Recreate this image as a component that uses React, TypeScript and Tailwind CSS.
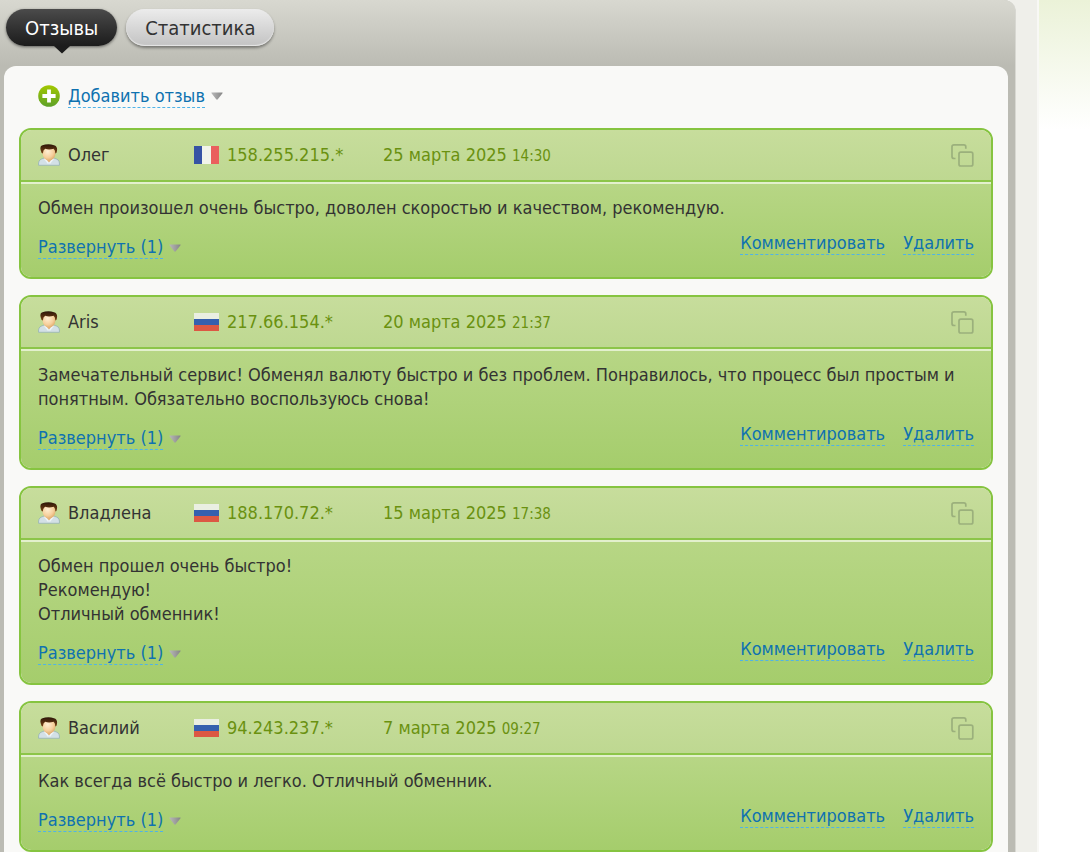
import { useState } from "react";

type Country = "fr" | "ru";

interface Review {
  id: number;
  name: string;
  country: Country;
  ip: string;
  date: string;
  time: string;
  lines: string[];
  replies: number;
}

const reviews: Review[] = [
  {
    id: 1,
    name: "Олег",
    country: "fr",
    ip: "158.255.215.*",
    date: "25 марта 2025",
    time: "14:30",
    lines: ["Обмен произошел очень быстро, доволен скоростью и качеством, рекомендую."],
    replies: 1,
  },
  {
    id: 2,
    name: "Aris",
    country: "ru",
    ip: "217.66.154.*",
    date: "20 марта 2025",
    time: "21:37",
    lines: [
      "Замечательный сервис! Обменял валюту быстро и без проблем. Понравилось, что процесс был простым и понятным. Обязательно воспользуюсь снова!",
    ],
    replies: 1,
  },
  {
    id: 3,
    name: "Владлена",
    country: "ru",
    ip: "188.170.72.*",
    date: "15 марта 2025",
    time: "17:38",
    lines: ["Обмен прошел очень быстро!", "Рекомендую!", "Отличный обменник!"],
    replies: 1,
  },
  {
    id: 4,
    name: "Василий",
    country: "ru",
    ip: "94.243.237.*",
    date: "7 марта 2025",
    time: "09:27",
    lines: ["Как всегда всё быстро и легко. Отличный обменник."],
    replies: 1,
  },
];

const linkClass =
  "border-b border-dashed border-[#4fb3e8] text-[#0f72b0] leading-[22px] hover:text-[#d04a1c] cursor-pointer";

function PlusIcon() {
  return (
    <svg className="h-[22px] w-[22px]" viewBox="0 0 22 22" aria-hidden="true">
      <defs>
        <linearGradient id="plus-fill" x1="0" y1="0" x2="0" y2="1">
          <stop offset="0" stopColor="#a3c800" />
          <stop offset="1" stopColor="#5da129" />
        </linearGradient>
      </defs>
      <circle cx="11" cy="11" r="10.8" fill="url(#plus-fill)" />
      <path d="M11 4.4v13.200M4.400 11h13.200" stroke="#fff" strokeWidth="3.8" />
    </svg>
  );
}

function ArrowDown() {
  return (
    <svg className="h-2 w-3" viewBox="0 0 12 8" aria-hidden="true">
      <defs>
        <linearGradient id="arrow-fill" x1="0" y1="0" x2="1" y2="0">
          <stop offset="0" stopColor="#b9b9b9" />
          <stop offset="1" stopColor="#858585" />
        </linearGradient>
      </defs>
      <path d="M0.800 0.500h10.400q0.800 0 0.300 0.800L6.800 7.300q-0.800 0.800-1.600 0L0.500 1.300q-0.500-0.800 0.300-0.800z" fill="url(#arrow-fill)" />
    </svg>
  );
}

function UserIcon() {
  return (
    <svg className="h-[22px] w-[22px]" viewBox="0 0 22 22" aria-hidden="true">
      <defs>
        <radialGradient id="user-face" cx="0.4" cy="0.35" r="0.75">
          <stop offset="0" stopColor="#fff0d4" />
          <stop offset="0.6" stopColor="#f6cf9c" />
          <stop offset="1" stopColor="#d9a05f" />
        </radialGradient>
        <linearGradient id="user-hair" x1="0" y1="0" x2="0" y2="1">
          <stop offset="0" stopColor="#2b1508" />
          <stop offset="1" stopColor="#7a4416" />
        </linearGradient>
      </defs>
      <path d="M0.600 21.300q-0.600-5 2.900-6.300l4-1.500h7l4 1.500q3.500 1.300 2.900 6.300z" fill="#d3e0e6" stroke="#9cb8b4" strokeWidth="0.900" />
      <path d="M7 14L11 18.500l4-4.500z" fill="#e9b578" />
      <path d="M6.600 14.500l3.900 5M15.400 14.500l-3.900 5" stroke="#eef4f7" strokeWidth="1.300" />
      <ellipse cx="11" cy="9.500" rx="6.400" ry="7" fill="url(#user-face)" />
      <path d="M3.600 9Q1 2.800 3.800 1.600Q10-1 16 1.200Q20.600 2.600 18.400 9L17.300 9.500Q17.300 5.800 15.600 4.800Q10.500 6 7.200 4.700Q5 6 4.900 9.500z" fill="url(#user-hair)" />
    </svg>
  );
}

function Flag({ country }: { country: Country }) {
  if (country === "fr") {
    return (
      <svg className="h-[18px] w-[25px]" viewBox="0 0 25 18" role="img" aria-label="FR">
        <path d="M0 0h8v18H0z" fill="#3653a4" />
        <path d="M8 0h9v18H8z" fill="#f1f4ea" />
        <path d="M17 0h8v18h-8z" fill="#ea5f5d" />
      </svg>
    );
  }
  return (
    <svg className="h-[18px] w-[25px]" viewBox="0 0 25 18" role="img" aria-label="RU">
      <path d="M0 0h25v6H0z" fill="#eaefe2" />
      <path d="M0 6h25v6H0z" fill="#3560ae" />
      <path d="M0 12h25v6H0z" fill="#dc5843" />
    </svg>
  );
}

function CopyIcon() {
  return (
    <svg className="h-6 w-6" viewBox="0 0 24 24" fill="none" stroke="#9bb07c" strokeWidth="1.700" aria-hidden="true">
      <rect x="9" y="9.200" width="13.800" height="13.800" rx="1.800" />
      <path d="M5.500 15.500H4q-2 0-2-2V3.800q0-2 2-2h9.800q2 0 2 2v2" />
    </svg>
  );
}

function ReviewCard({ review }: { review: Review }) {
  return (
    <article className="overflow-hidden rounded-xl border-2 border-[#86c440]">
      <header className="flex h-[52px] items-center border-b-2 border-[#8cc549] bg-linear-to-b from-[#c7dd9c] to-[#bed891] px-[17px]">
        <div className="flex w-[156px] items-center gap-2">
          <UserIcon />
          <span>{review.name}</span>
        </div>
        <div className="flex w-[189px] items-center gap-2 text-[#6a9110]">
          <Flag country={review.country} />
          <span>{review.ip}</span>
        </div>
        <div className="text-[#6a9110]">
          {review.date} <span className="text-[15px]">{review.time}</span>
        </div>
        <button type="button" aria-label="Копировать" className="ml-auto cursor-pointer">
          <CopyIcon />
        </button>
      </header>
      <div className="border-t-2 border-[#e3f0cd] bg-linear-to-b from-[#b7d685] to-[#a5cd6c] px-[17px] pt-3 pb-[18px]">
        {review.lines.map((line) => (
          <p key={line} className="leading-6">
            {line}
          </p>
        ))}
        <div className="mt-3 flex items-start justify-between">
          <div className="flex items-center gap-[6px] pt-1">
            <button type="button" className={linkClass}>
              Развернуть ({review.replies})
            </button>
            <ArrowDown />
          </div>
          <div className="flex gap-[18px]">
            <button type="button" className={linkClass}>
              Комментировать
            </button>
            <button type="button" className={linkClass}>
              Удалить
            </button>
          </div>
        </div>
      </div>
    </article>
  );
}

export default function App() {
  const [tab, setTab] = useState("reviews");

  return (
    <div className="flex min-h-screen bg-white font-['DejaVu_Sans_Condensed','DejaVu_Sans',sans-serif] text-lg text-[#333]">
      <div className="flex min-w-0 flex-1 border-r-2 border-[#f8f8f5] bg-[#efefea] pr-[21px]">
        <main className="flex min-w-0 flex-1 flex-col rounded-tr-xl border-r border-[#d8d8d2] bg-[#bdbdb5] bg-linear-to-b from-[#d8d8d0] to-[#bbbbb3] to-[66px] pr-[7px] pl-1">
          {/* Tabs */}
          <nav className="flex h-[66px] items-start gap-[9px] pt-[9px] pl-[2px] text-xl">
            <button
              type="button"
              onClick={() => setTab("reviews")}
              className="relative h-[37px] cursor-pointer rounded-full bg-linear-to-b from-[#4b4b4b] to-[#1c1c1c] px-[19px] text-white shadow-[0_1px_3px_#00000080]"
            >
              Отзывы
              {tab === "reviews" && (
                <svg className="absolute top-full left-1/2 h-2 w-4 -translate-x-1/2" viewBox="0 0 16 8" aria-hidden="true">
                  <path d="M0 0h16L8 7.500z" fill="#1c1c1c" />
                </svg>
              )}
            </button>
            <button
              type="button"
              onClick={() => setTab("stats")}
              className="h-[37px] cursor-pointer rounded-full bg-linear-to-b from-[#ececec] to-[#c3c3c3] px-[19px] text-[#333] shadow-[0_2px_3px_#00000066,inset_0_-1px_1px_#e8e8e8]"
            >
              Статистика
            </button>
          </nav>

          <section className="flex-1 rounded-t-xl bg-[#f9f9f7] px-[15px]">
            <div className="flex h-[62px] items-center gap-2 pb-[2px] pl-[19px]">
              <PlusIcon />
              <div className="flex items-center gap-[6px]">
                <button type="button" className={linkClass}>
                  Добавить отзыв
                </button>
                <ArrowDown />
              </div>
            </div>
            <div className="flex flex-col gap-4">
              {reviews.map((review) => (
                <ReviewCard key={review.id} review={review} />
              ))}
            </div>
          </section>
        </main>
      </div>
      <aside className="w-[51px] bg-linear-to-b from-[#ebf2d8] to-white to-[130px]" />
    </div>
  );
}
